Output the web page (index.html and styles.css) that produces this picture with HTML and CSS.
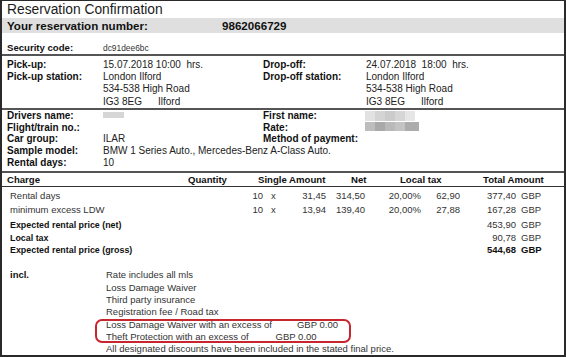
FILE: index.html
```html
<!DOCTYPE html>
<html lang="en">
<head>
<meta charset="utf-8">
<title>Reservation Confirmation</title>
<link rel="stylesheet" href="styles.css">
</head>
<body>
<div class="page">
  <div class="title">Reservation Confirmation</div>
  <div class="band">
    <span>Your reservation number:</span>
    <span>9862066729</span>
  </div>
  <div class="security">
    <span class="lbl">Security code:</span>
    <span class="code">dc91dee6bc</span>
  </div>
  <div class="rule"></div>
  <div class="info info1">
    <span class="lbl">Pick-up:</span><span class="val pre">15.07.2018 10:00  hrs.</span>
    <span class="lbl">Drop-off:</span><span class="val pre">24.07.2018  18:00  hrs.</span>
    <span class="lbl">Pick-up station:</span><span class="val">London Ilford</span>
    <span class="lbl">Drop-off station:</span><span class="val">London Ilford</span>
    <span class="lbl"></span><span class="val">534-538 High Road</span>
    <span class="lbl"></span><span class="val">534-538 High Road</span>
    <span class="lbl"></span><span class="val"><span class="zip">IG3 8EG</span>Ilford</span>
    <span class="lbl"></span><span class="val"><span class="zip">IG3 8EG</span>Ilford</span>
  </div>
  <div class="rule"></div>
  <div class="info info2">
    <span class="lbl">Drivers name:</span><span class="val"><span class="blur blur-a"></span></span>
    <span class="lbl">First name:</span><span class="val"><span class="blur blur-b"></span></span>
    <span class="lbl">Flight/train no.:</span><span class="val"></span>
    <span class="lbl">Rate:</span><span class="val"><span class="blur blur-c"></span></span>
    <span class="lbl">Car group:</span><span class="val">ILAR</span>
    <span class="lbl">Method of payment:</span><span class="val"></span>
    <span class="lbl">Sample model:</span><span class="val wide">BMW 1 Series Auto., Mercedes-Benz A-Class Auto.</span>
    <span class="lbl">Rental days:</span><span class="val wide">10</span>
  </div>
  <div class="rule"></div>
  <div class="thead">
    <span class="h-charge">Charge</span>
    <span class="h-qty">Quantity</span>
    <span class="h-single">Single Amount</span>
    <span class="h-net">Net</span>
    <span class="h-tax">Local tax</span>
    <span class="h-total">Total Amount</span>
  </div>
  <div class="rows">
    <div class="row">
      <span class="c-name">Rental days</span>
      <span class="c-qty">10</span>
      <span class="c-x">x</span>
      <span class="c-num c-single">31,45</span>
      <span class="c-num c-net">314,50</span>
      <span class="c-num c-pct">20,00%</span>
      <span class="c-num c-tax">62,90</span>
      <span class="c-num c-total">377,40</span>
      <span class="c-cur">GBP</span>
    </div>
    <div class="row">
      <span class="c-name">minimum excess LDW</span>
      <span class="c-qty">10</span>
      <span class="c-x">x</span>
      <span class="c-num c-single">13,94</span>
      <span class="c-num c-net">139,40</span>
      <span class="c-num c-pct">20,00%</span>
      <span class="c-num c-tax">27,88</span>
      <span class="c-num c-total">167,28</span>
      <span class="c-cur">GBP</span>
    </div>
  </div>
  <div class="summary">
    <div class="srow"><span class="s-label">Expected rental price (net)</span><span class="s-amt">453,90</span><span class="s-cur">GBP</span></div>
    <div class="srow"><span class="s-label">Local tax</span><span class="s-amt">90,78</span><span class="s-cur">GBP</span></div>
    <div class="srow strong"><span class="s-label">Expected rental price (gross)</span><span class="s-amt">544,68</span><span class="s-cur">GBP</span></div>
  </div>
  <div class="incl">
    <span class="incl-lbl">incl.</span>
    <div class="incl-list">
      <div>Rate includes all mls</div>
      <div>Loss Damage Waiver</div>
      <div>Third party insurance</div>
      <div>Registration fee / Road tax</div>
      <div class="marked">
        <div>Loss Damage Waiver with an excess of<span class="amt amt-1">GBP 0.00</span></div>
        <div>Theft Protection with an excess of<span class="amt amt-2">GBP 0.00</span></div>
      </div>
      <div>All designated discounts have been included in the stated final price.</div>
    </div>
  </div>
</div>
</body>
</html>
```
FILE: styles.css
```css
html, body {
  margin: 0;
  padding: 0;
  background: #fff;
}

.page {
  width: 566px;
  height: 357px;
  box-sizing: border-box;
  border: 2px solid #2a2a2a;
  border-top-width: 1px;
  overflow: hidden;
  background: #fff;
  font-family: "Liberation Sans", Arial, sans-serif;
  color: #222;
}

.title {
  height: 17px;
  line-height: 17px;
  font-size: 13.8px;
  padding-left: 5px;
  color: #1a1a1a;
}

.band {
  height: 15px;
  line-height: 15px;
  background: #dfdfdf;
  font-weight: bold;
  font-size: 11.6px;
  color: #111;
  padding-left: 5px;
  display: grid;
  grid-template-columns: 215px auto;
}

.security {
  height: 21px;
  box-sizing: border-box;
  padding: 9px 0 0 5px;
  line-height: 12px;
  display: grid;
  grid-template-columns: 96px auto;
  align-items: baseline;
}

.security .lbl {
  font-weight: bold;
  font-size: 9.6px;
  color: #111;
}

.security .code {
  font-size: 8.4px;
  color: #333;
}

.rule {
  height: 2px;
  background: #555;
}

.info {
  display: grid;
  grid-template-columns: 96px 160px 103px auto;
  padding-left: 5px;
  font-size: 10px;
}

.info1 {
  padding-top: 3px;
  line-height: 12.2px;
}

.info2 {
  line-height: 11.8px;
  padding-bottom: 2px;
}

.info .lbl {
  font-weight: bold;
  color: #111;
  white-space: nowrap;
}

.info .val {
  color: #222;
  white-space: nowrap;
}

.info .val.pre {
  white-space: pre;
}

.info .val.wide {
  grid-column: 2 / 5;
}

.zip {
  display: inline-block;
  width: 55px;
}

.blur {
  display: inline-block;
  vertical-align: top;
  filter: blur(0.6px);
}

.blur-a {
  width: 21px;
  height: 6px;
  margin-top: 2px;
  background: #d6d6d6;
}

.blur-b {
  width: 50px;
  height: 10px;
  margin-top: 1px;
  margin-left: -1px;
  background: linear-gradient(90deg, #e2e2e2 0 10px, #d4d4d4 10px 20px, #cbcbcb 20px 30px, #d6d6d6 30px 40px, #e6e6e6 40px 50px);
}

.blur-c {
  width: 54px;
  height: 9px;
  margin-top: 0;
  margin-left: -1px;
  background: linear-gradient(90deg, #bdbdbd 0 10px, #a9a9a9 10px 20px, #b9b9b9 20px 30px, #c3c3c3 30px 40px, #acacac 40px 54px);
}

.thead {
  height: 13px;
  line-height: 13px;
  border-bottom: 1px solid #333;
  display: grid;
  grid-template-columns: 186px 70px 93px 49px 83px auto;
  font-weight: bold;
  font-size: 9.6px;
  color: #111;
}

.h-charge {
  padding-left: 5px;
}

.rows {
  padding-top: 2px;
  font-size: 9.5px;
  line-height: 14px;
  color: #333;
}

.row {
  display: grid;
  grid-template-columns: 238px 23px 17px 46px 39px 56px 39px 56px auto;
}

.c-name {
  padding-left: 8px;
}

.c-qty,
.c-num {
  text-align: right;
}

.c-x {
  padding-left: 8px;
}

.c-cur,
.s-cur {
  padding-left: 5px;
}

.summary {
  padding-top: 2.5px;
  font-size: 9.5px;
  line-height: 12.5px;
  color: #333;
}

.srow {
  display: grid;
  grid-template-columns: 458px 56px auto;
}

.s-label {
  padding-left: 8px;
  font-weight: bold;
  color: #111;
  font-size: 8.9px;
}

.s-amt {
  text-align: right;
}

.srow.strong .s-amt,
.srow.strong .s-cur {
  font-weight: bold;
  color: #111;
}

.incl {
  margin-top: 12.5px;
  display: grid;
  grid-template-columns: 104px auto;
  font-size: 9.5px;
  line-height: 12.35px;
  color: #333;
}

.incl-lbl {
  padding-left: 8px;
  font-weight: bold;
  color: #111;
}

.marked {
  position: relative;
}

.marked::after {
  content: "";
  position: absolute;
  left: -11px;
  top: 0;
  width: 256px;
  height: 24px;
  box-sizing: border-box;
  border: 2px solid #c8262e;
  border-radius: 7px;
}

.amt-1 {
  margin-left: 25px;
}

.amt-2 {
  margin-left: 27px;
}
```
